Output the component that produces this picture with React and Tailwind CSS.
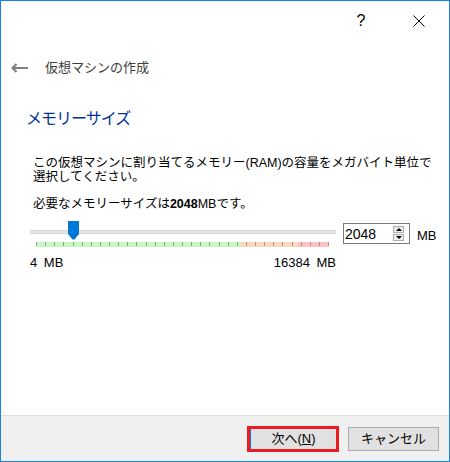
const ticks = Array.from({ length: 33 }, (_, i) => i);

function BackArrow() {
  return (
    <svg width="17" height="10" viewBox="0 0 17 10" className="shrink-0">
      <path d="M1.5 5 H17 M5.5 1 L1.5 5 L5.5 9" fill="none" stroke="#808080" strokeWidth="2.2" />
    </svg>
  );
}

function SliderHandle() {
  return (
    <svg width="11" height="19" viewBox="0 0 11 19">
      <path d="M0 0 H11 V13 L6.5 18.5 H4.5 L0 13 Z" fill="#0078d7" />
    </svg>
  );
}

export default function App() {
  return (
    <div className="w-[450px] h-[462px] border border-[#1883d7] bg-white flex flex-col text-black font-['Liberation_Sans','Noto_Sans_CJK_JP',sans-serif]">
      {/* title bar */}
      <div className="h-[40px] flex items-center justify-end gap-[47px] pr-[24px]">
        <span className="w-[10px] text-center text-[16px] leading-none">?</span>
        <svg width="12" height="12" viewBox="0 0 12 12">
          <path d="M0.5 0.5 L11.5 11.5 M11.5 0.5 L0.5 11.5" stroke="#000" strokeWidth="1" />
        </svg>
      </div>

      <div className="flex-1 flex flex-col">
        {/* wizard header */}
        <div className="mt-[13px] h-[28px] flex items-center pl-[10px] gap-[17px]">
          <BackArrow />
          <span className="text-[13px] text-[#3b3b3b]">仮想マシンの作成</span>
        </div>

        <h1 className="mt-[25px] pl-[25px] text-[16px] leading-[24px] tracking-[-1px] text-[#003399]">メモリーサイズ</h1>

        <p className="mt-[25px] pl-[32px] text-[12.5px] leading-[14px] whitespace-nowrap">
          この仮想マシンに割り当てるメモリー(RAM)の容量をメガバイト単位で
          <br />
          選択してください。
        </p>
        <p className="mt-[13px] pl-[32px] text-[12.5px] leading-[14px] whitespace-nowrap">
          必要なメモリーサイズは<b>2048</b>MBです。
        </p>

        {/* slider + spin box */}
        <div className="mt-[10px] pl-[29px] flex items-start">
          <div className="relative w-[306px]">
            <div className="mt-[9px] h-[4px] bg-[#e7e7e7] border border-[#d6d6d6]" />
            <div className="relative ml-[6px] mt-[8px] w-[293px] h-[5px] flex">
              <div className="w-[205px] bg-[#c4f9bf]" />
              <div className="w-[57px] bg-[#ffd6bf]" />
              <div className="flex-1 bg-[#ffc2c2]" />
              <div className="absolute inset-x-0 top-0 h-[4px] flex justify-between">
                {ticks.map(i => (
                  <div key={i} className="w-px h-full bg-[#9a9a9a]" />
                ))}
              </div>
            </div>
            <div className="mt-[9px] flex justify-between text-[13px] leading-[14px] [word-spacing:3px]">
              <span>4 MB</span>
              <span>16384 MB</span>
            </div>
            <div className="absolute top-0 left-[38px]">
              <SliderHandle />
            </div>
          </div>

          <div className="ml-[7px] mt-[2px] w-[67px] h-[21px] border border-[#7a7a7a] flex items-center">
            <span className="flex-1 pl-[1px] text-[14px] leading-none">2048</span>
            <div className="mr-[5px] w-[11px] flex flex-col gap-px">
              <div className="h-[7px] border border-[#adadad] bg-[#ececec] flex items-center justify-center">
                <div className="w-0 h-0 border-x-[3px] border-x-transparent border-b-[3px] border-b-black" />
              </div>
              <div className="h-[7px] border border-[#adadad] bg-[#ececec] flex items-center justify-center">
                <div className="w-0 h-0 border-x-[3px] border-x-transparent border-t-[3px] border-t-black" />
              </div>
            </div>
          </div>
          <span className="ml-[7px] mt-[4px] text-[13px] leading-[21px]">MB</span>
        </div>
      </div>

      {/* footer */}
      <div className="h-[46px] border-t border-[#dfdfdf] bg-[#f0f0f0] flex items-center justify-end gap-[9px] pr-[10px]">
        <button className="w-[92px] h-[26px] border-[3px] border-[#ed1c24] bg-[#e1e1e1] flex">
          <span className="flex-1 border-l border-[#0078d7] flex items-center justify-center text-[13px]">
            次へ(<u>N</u>)
          </span>
        </button>
        <button className="w-[91px] h-[24px] border border-[#adadad] bg-[#e1e1e1] flex items-center justify-center text-[13px]">
          キャンセル
        </button>
      </div>
    </div>
  );
}
